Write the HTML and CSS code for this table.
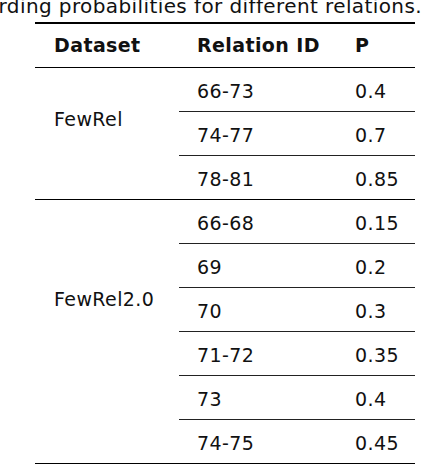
FILE: index.html
```html
<!DOCTYPE html>
<html lang="en">
<head>
    <meta charset="UTF-8">
    <meta name="viewport" content="width=device-width, initial-scale=1.0">
    <title>Relation probabilities</title>
    <link rel="stylesheet" href="styles.css">
</head>
<body>

    <div class="caption">
        <span>Table 3: The forwarding probabilities for different relations.</span>
    </div>

    <table class="prob-table">
        <thead>
            <tr>
                <th class="col-ds">Dataset</th>
                <th class="col-rel">Relation ID</th>
                <th class="col-p">P</th>
            </tr>
        </thead>
        <tbody>
            <tr>
                <td rowspan="3" class="ds ds-fewrel">FewRel</td>
                <td>66-73</td>
                <td>0.4</td>
            </tr>
            <tr class="sep">
                <td>74-77</td>
                <td>0.7</td>
            </tr>
            <tr class="sep">
                <td>78-81</td>
                <td>0.85</td>
            </tr>
        </tbody>
        <tbody class="group">
            <tr>
                <td rowspan="6" class="ds ds-fewrel2">FewRel2.0</td>
                <td>66-68</td>
                <td>0.15</td>
            </tr>
            <tr class="sep">
                <td>69</td>
                <td>0.2</td>
            </tr>
            <tr class="sep">
                <td>70</td>
                <td>0.3</td>
            </tr>
            <tr class="sep">
                <td>71-72</td>
                <td>0.35</td>
            </tr>
            <tr class="sep">
                <td>73</td>
                <td>0.4</td>
            </tr>
            <tr class="sep">
                <td>74-75</td>
                <td>0.45</td>
            </tr>
        </tbody>
    </table>

</body>
</html>
```

FILE: styles.css
```css
body {
    margin: 0;
    font-family: "DejaVu Sans", Arial, sans-serif;
    color: #111;
    background: #fff;
    overflow: hidden;
}
.caption {
    display: flex;
    justify-content: flex-end;
    width: 422px;
    height: 20px;
    margin-top: -4px;
    font-size: 20px;
    line-height: 20px;
    white-space: nowrap;
    letter-spacing: 0.4px;
}
.prob-table {
    margin: 6px 0 0 35px;
    width: 380px;
    border-collapse: collapse;
    border-top: 2px solid #000;
    border-bottom: 2px solid #000;
    font-size: 19px;
    line-height: 21px;
    letter-spacing: 0.4px;
}
.prob-table th {
    text-align: left;
    font-weight: bold;
    padding: 11px 0 11px 18px;
    border-bottom: 1px solid #000;
}
.prob-table td {
    text-align: left;
    padding: 13px 0 9px 18px;
}
.col-ds {
    width: 125px;
}
.prob-table th.col-ds,
.prob-table td.ds {
    padding-left: 19px;
}
.col-rel {
    width: 140px;
}
.prob-table td.ds {
    vertical-align: top;
}
.prob-table td.ds-fewrel {
    padding-top: 41px;
}
.prob-table td.ds-fewrel2 {
    padding-top: 89px;
}
.sep td {
    border-top: 1px solid #222;
}
.group {
    border-top: 1px solid #000;
}
```
